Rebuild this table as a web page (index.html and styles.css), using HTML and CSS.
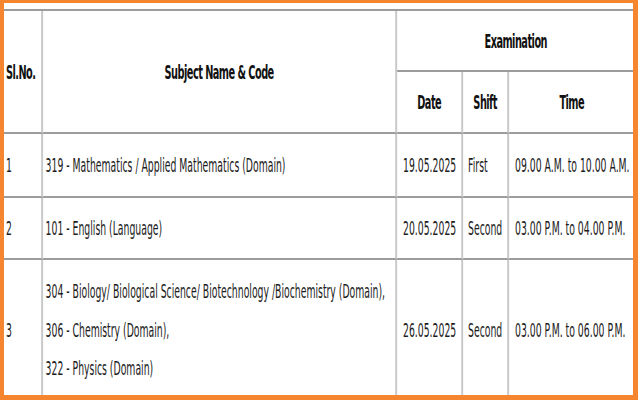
FILE: index.html
```html
<!DOCTYPE html>
<html lang="en">
<head>
<meta charset="utf-8">
<title>Examination Schedule</title>
<link rel="stylesheet" href="styles.css">
</head>
<body>
<div class="frame">
  <div class="sheet">
    <table class="schedule">
      <colgroup>
        <col class="c-no">
        <col class="c-subject">
        <col class="c-date">
        <col class="c-shift">
        <col class="c-time">
      </colgroup>
      <thead>
        <tr class="h1">
          <th rowspan="2" class="th-no">Sl.No.</th>
          <th rowspan="2">Subject Name &amp; Code</th>
          <th colspan="3">Examination</th>
        </tr>
        <tr class="h2">
          <th>Date</th>
          <th>Shift</th>
          <th>Time</th>
        </tr>
      </thead>
      <tbody>
        <tr class="r1">
          <td class="no">1</td>
          <td class="subject">319 - Mathematics / Applied Mathematics (Domain)</td>
          <td class="date">19.05.2025</td>
          <td class="shift">First</td>
          <td class="time">09.00 A.M. to 10.00 A.M.</td>
        </tr>
        <tr class="r2">
          <td class="no">2</td>
          <td class="subject">101 - English (Language)</td>
          <td class="date">20.05.2025</td>
          <td class="shift">Second</td>
          <td class="time">03.00 P.M. to 04.00 P.M.</td>
        </tr>
        <tr class="r3">
          <td class="no">3</td>
          <td class="subject multi">
            <div class="line">304 - Biology/ Biological Science/ Biotechnology /Biochemistry (Domain),</div>
            <div class="line">306 - Chemistry (Domain),</div>
            <div class="line">322 - Physics (Domain)</div>
          </td>
          <td class="date">26.05.2025</td>
          <td class="shift">Second</td>
          <td class="time">03.00 P.M. to 06.00 P.M.</td>
        </tr>
      </tbody>
    </table>
  </div>
</div>
</body>
</html>
```

FILE: styles.css
```css
html, body {
  margin: 0;
  padding: 0;
  background: #ffffff;
}

.frame {
  position: relative;
  width: 638px;
  height: 400px;
  overflow: hidden;
  background: #ffffff;
}

.frame::after {
  content: "";
  position: absolute;
  inset: 0;
  border-style: solid;
  border-color: #f5852e;
  border-width: 3px 5px 5px 4px;
  pointer-events: none;
}

.sheet {
  margin-left: 4px;
  padding-top: 9px;
  width: 1293px;
  transform: scaleX(0.489);
  transform-origin: 0 0;
}

.schedule {
  table-layout: fixed;
  width: 1293px;
  border-collapse: separate;
  border-spacing: 0;
  border-top: 2px solid #9c9c9c;
  font-family: "DejaVu Sans", Verdana, sans-serif;
  font-size: 19px;
  color: #1c1c1c;
}

.c-no { width: 80px; }
.c-subject { width: 724px; }
.c-date { width: 135px; }
.c-shift { width: 94px; }
.c-time { width: 260px; }

.schedule th,
.schedule td {
  box-sizing: border-box;
  border-right: 4px solid #c8c8c8;
  border-bottom: 2px solid #9c9c9c;
  vertical-align: middle;
  padding: 0;
  white-space: nowrap;
}

.schedule th {
  font-size: 20px;
  font-weight: bold;
  letter-spacing: -1.1px;
  color: #111111;
  text-align: center;
}

.schedule th.th-no {
  text-align: left;
  padding-left: 4px;
}

.h1 { height: 61px; }
.h2 { height: 62px; }
.r1 { height: 64px; }
.r2 { height: 62px; }

.schedule td.no {
  padding-left: 4px;
}

.schedule td.subject {
  padding-left: 5px;
}

.schedule td.date {
  padding-left: 12px;
}

.schedule td.shift {
  padding-left: 10px;
}

.schedule td.time {
  padding-left: 12px;
}

.schedule td.multi {
  padding-top: 12px;
  padding-bottom: 12px;
}

.line {
  line-height: 38.5px;
}
```
